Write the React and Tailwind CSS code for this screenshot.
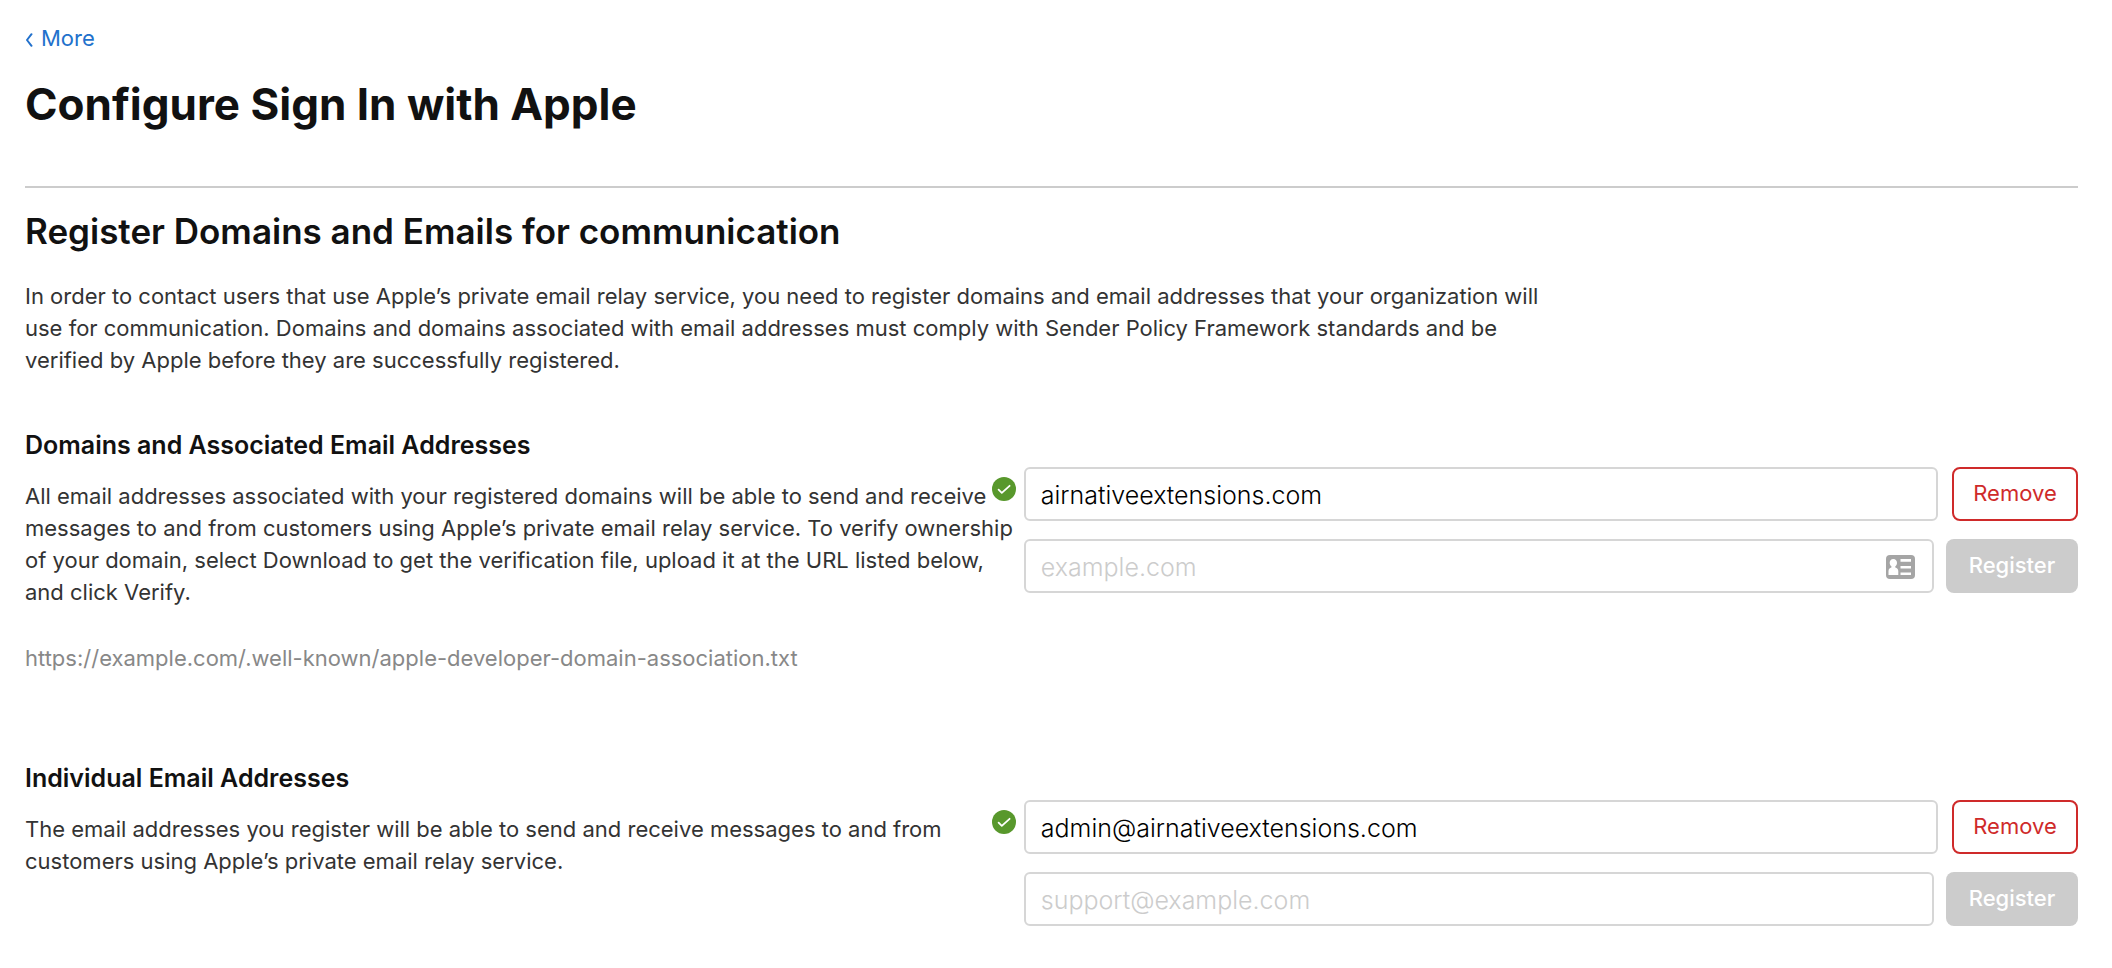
import { useState } from "react";

function CheckBadge() {
  return (
    <svg viewBox="0 0 24 24" className="absolute top-2.5 -left-8 size-6" role="img" aria-label="Verified">
      <circle cx="12" cy="12" r="12" fill="#58982c" />
      <path d="M6.6 12.7l3.200 3.100 7.800-7" fill="none" stroke="#fff" strokeWidth="1.8" strokeLinecap="round" strokeLinejoin="round" />
    </svg>
  );
}

function ContactCardIcon() {
  return (
    <svg viewBox="0 0 29 24" className="h-6 w-[29px]" aria-hidden="true">
      <rect width="29" height="24" rx="4" fill="#a5a5a5" />
      <path
        d="M7.300 4C4.900 4 3.600 5.800 3.700 8c.1 1.500.7 2.600 1.700 3.300v1.200c-1.800.6-2.900 1.700-2.900 3.700V20h9.800v-3.800c0-2-1.200-3.100-3-3.700v-1.200c1-.7 1.600-1.800 1.700-3.300.1-2.200-1.300-4-3.700-4z"
        fill="#fff"
      />
      <path d="M14.500 4h10.500v2.800H14.500zM14.500 11h10.500v2.500H14.500zM14.500 17.500h10.500v2.500H14.500z" fill="#fff" />
    </svg>
  );
}

const fieldClass =
  "h-[54px] w-full rounded-md border-2 border-[#d6d6d6] bg-white px-[15px] pt-0.5 text-[25px] font-light text-black outline-none placeholder:text-[#cccccc] placeholder:opacity-100";

function RegisteredRow({ label, initial }) {
  const [value, setValue] = useState(initial);
  return (
    <div className="relative flex gap-3.5">
      <CheckBadge />
      <input type="text" aria-label={label} value={value} onChange={(e) => setValue(e.target.value)} className={fieldClass} />
      <button type="button" className="h-[54px] w-[126px] shrink-0 rounded-lg border-2 border-[#cf2a2a] bg-white pb-0.5 text-[22px] text-[#cf2a2a]">
        Remove
      </button>
    </div>
  );
}

function NewRow({ label, type, placeholder, contacts }) {
  return (
    <div className="flex gap-3">
      <div className="relative flex-1">
        <input type={type} aria-label={label} placeholder={placeholder} className={fieldClass} />
        {contacts && (
          <button type="button" aria-label="Choose a contact" className="absolute top-4 right-[19px]">
            <ContactCardIcon />
          </button>
        )}
      </div>
      <button type="button" disabled className="h-[54px] w-[132px] shrink-0 rounded-lg bg-[#cccccc] pb-0.5 text-[22px] font-medium text-white">
        Register
      </button>
    </div>
  );
}

function Section({ title, description, note, children }) {
  return (
    <section className="grid grid-cols-[48.65%_1fr]">
      <div>
        <h3 className="text-[25px] leading-8 font-semibold text-[#111111]">{title}</h3>
        <p className="mt-[19px] text-[22px] leading-8 text-[#333333]">{description}</p>
        {note && <p className="mt-[34px] text-[22px] leading-8 text-[#888888]">{note}</p>}
      </div>
      <div className="flex flex-col gap-[18px] pt-[38px]">{children}</div>
    </section>
  );
}

export default function App() {
  return (
    <main className="bg-white pt-[22px] pr-[34px] pb-10 pl-[25px] font-['Inter',sans-serif]">
      <a href="#more" className="inline-flex items-center gap-2 text-[22px] leading-8 text-[#2271cc]">
        <svg viewBox="0 0 8 14" className="mt-1 h-3.5 w-2" aria-hidden="true">
          <path d="M6.500 1.200L2 7l4.500 5.800" fill="none" stroke="currentColor" strokeWidth="2" strokeLinecap="round" strokeLinejoin="round" />
        </svg>
        More
      </a>
      <h1 className="mt-[25px] text-[44px] leading-[50px] font-bold text-[#111111]">Configure Sign In with Apple</h1>
      <hr className="mt-[57px] border-t-2 border-[#cccccc]" />
      <h2 className="mt-[19px] text-[35px] leading-[48px] font-semibold text-[#111111]">
        Register Domains and Emails for communication
      </h2>
      <p className="mt-[25px] max-w-[1530px] text-[22px] leading-8 text-[#333333]">
        In order to contact users that use Apple’s private email relay service, you need to register domains and email
        addresses that your organization will use for communication. Domains and domains associated with email addresses
        must comply with Sender Policy Framework standards and be verified by Apple before they are successfully
        registered.
      </p>
      <div className="mt-[53px] flex flex-col gap-[88px]">
        <Section
          title="Domains and Associated Email Addresses"
          description="All email addresses associated with your registered domains will be able to send and receive messages to and from customers using Apple’s private email relay service. To verify ownership of your domain, select Download to get the verification file, upload it at the URL listed below, and click Verify."
          note="https://example.com/.well-known/apple-developer-domain-association.txt"
        >
          <RegisteredRow label="Registered domain" initial="airnativeextensions.com" />
          <NewRow label="New domain" type="text" placeholder="example.com" contacts />
        </Section>
        <Section
          title="Individual Email Addresses"
          description="The email addresses you register will be able to send and receive messages to and from customers using Apple’s private email relay service."
        >
          <RegisteredRow label="Registered email address" initial="admin@airnativeextensions.com" />
          <NewRow label="New email address" type="email" placeholder="support@example.com" />
        </Section>
      </div>
    </main>
  );
}
